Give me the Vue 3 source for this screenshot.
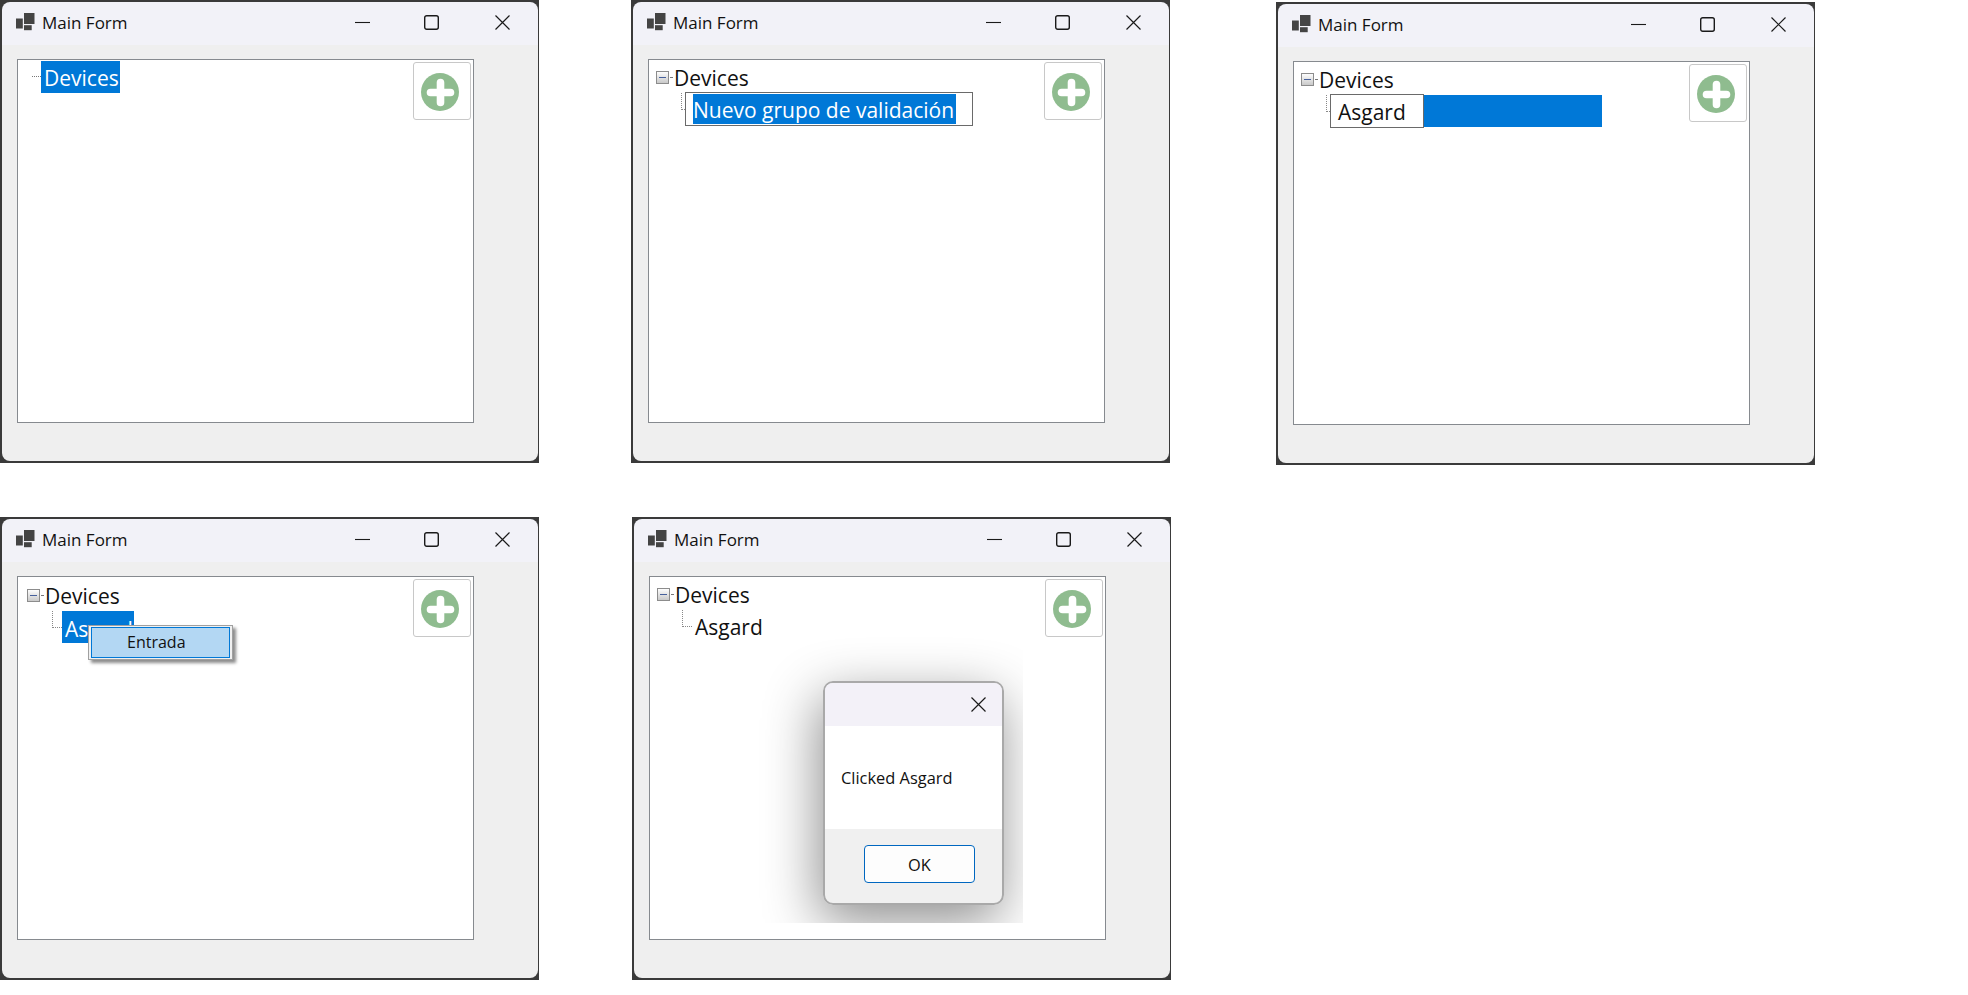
<template>
  <div class="desktop">
    <div v-for="win in windows" :key="win.id" class="window" :class="win.id">
      <div class="titlebar">
        <svg class="app-icon" width="19" height="18" viewBox="0 0 19 18">
          <rect x="8" y="0" width="10.5" height="11" fill="#444" />
          <rect x="0" y="5.5" width="6.8" height="10" fill="#444" />
          <rect x="8" y="12.2" width="7.7" height="5" fill="#444" />
        </svg>
        <span class="title">Main Form</span>
        <div class="controls">
          <svg width="15" height="15" viewBox="0 0 15 15">
            <path d="M0 7.5H15" stroke="#1a1a1a" stroke-width="1.1" />
          </svg>
          <svg class="max-icon" width="15" height="15" viewBox="0 0 15 15">
            <rect x="0.7" y="0.7" width="13.6" height="13.6" rx="2" fill="none" stroke="#1a1a1a" stroke-width="1.4" />
          </svg>
          <svg width="15" height="15" viewBox="0 0 15 15">
            <path d="M0.5 0.5L14.5 14.5M14.5 0.5L0.5 14.5" stroke="#1a1a1a" stroke-width="1.2" />
          </svg>
        </div>
      </div>

      <div class="body">
        <div class="tree">
          <!-- nodo raiz -->
          <div class="node">
            <template v-if="win.id === 'w1'">
              <span class="stub-long"></span>
              <span class="label selected root-selected">Devices</span>
            </template>
            <template v-else>
              <span class="expander"></span>
              <span class="stub"></span>
              <span class="label root-label">Devices</span>
            </template>
          </div>

          <!-- renombrando -->
          <div v-if="win.id === 'w2'" class="node child">
            <span class="elbow short"></span>
            <div class="edit wide">
              <span class="edit-selection">Nuevo grupo de validación</span>
            </div>
          </div>

          <div v-if="win.id === 'w3'" class="node child">
            <span class="elbow short"></span>
            <div class="rename-bar">
              <div class="edit narrow">Asgard</div>
            </div>
          </div>

          <div v-if="win.id === 'w4'" class="node child">
            <span class="elbow"></span>
            <span class="label selected asgard-selected">Asgard</span>
          </div>

          <div v-if="win.id === 'w5'" class="node child">
            <span class="elbow"></span>
            <span class="label">Asgard</span>
          </div>

          <button class="add-btn">
            <svg width="38" height="38" viewBox="0 0 38 38">
              <circle cx="19" cy="19" r="19" fill="#8fbc8f" />
              <path d="M19.5 9.5V29.5M9.5 19.5H29.5" stroke="#fff" stroke-width="7.6" stroke-linecap="round" />
            </svg>
          </button>

          <div v-if="win.id === 'w4'" class="context-menu">
            <div class="menu-item">Entrada</div>
          </div>

          <div v-if="win.id === 'w5'" class="dialog-clip">
            <div class="dialog">
              <div class="dialog-title">
                <svg width="15" height="15" viewBox="0 0 15 15">
                  <path d="M0.5 0.5L14.5 14.5M14.5 0.5L0.5 14.5" stroke="#1a1a1a" stroke-width="1.2" />
                </svg>
              </div>
              <div class="dialog-message">Clicked Asgard</div>
              <div class="dialog-footer">
                <button class="ok-btn">OK</button>
              </div>
            </div>
          </div>
        </div>
      </div>
    </div>
  </div>
</template>

<script setup>
const windows = [
  { id: 'w1' },
  { id: 'w2' },
  { id: 'w3' },
  { id: 'w4' },
  { id: 'w5' }
];
</script>

<style>
html, body {
  margin: 0;
  background: #fff;
}
</style>

<style scoped>
.desktop {
  position: relative;
  width: 1968px;
  height: 995px;
  background: #fff;
  overflow: hidden;
  font-family: "Open Sans", "Noto Sans", sans-serif;
  color: #111;
}

/* ventanas sueltas sobre el escritorio */
.window {
  position: absolute;
  width: 539px;
  height: 463px;
  box-sizing: border-box;
  padding: 2px 1.5px 2px 2px;
  background: #3a3a3a;
  display: flex;
  flex-direction: column;
}
.w1 { left: 0; top: 0; }
.w2 { left: 631px; top: 0; }
.w3 { left: 1276px; top: 2px; }
.w4 { left: 0; top: 517px; }
.w5 { left: 632px; top: 517px; }

.titlebar {
  box-sizing: border-box;
  height: 43px;
  flex-shrink: 0;
  display: flex;
  align-items: center;
  background: #f2f2f8;
  border-radius: 8px 8px 0 0;
  padding: 0 28px 2px 14px;
}
.app-icon {
  flex-shrink: 0;
  margin-top: -2px;
}
.title {
  margin-left: 7px;
  font-size: 17px;
  line-height: 20px;
}
.controls {
  margin-left: auto;
  display: flex;
  gap: 55px;
  align-items: center;
}
.max-icon {
  margin: 0 1px 0 -1px;
}

.body {
  flex: 1;
  background: #efefef;
  border-radius: 0 0 8px 8px;
  padding: 14px 0 0 15px;
}

.tree {
  position: relative;
  box-sizing: border-box;
  width: 457px;
  height: 364px;
  background: #fff;
  border: 1px solid #868a8f;
  padding-top: 1px;
  font-size: 21px;
}
.w4 .tree {
  padding-top: 2px;
  padding-left: 2px;
}

.node {
  display: flex;
  align-items: center;
  height: 32px;
  white-space: nowrap;
}
.child {
  padding-left: 32px;
}

.expander {
  box-sizing: border-box;
  width: 13px;
  height: 13px;
  margin-left: 7px;
  border: 1px solid #8c8c8c;
  background: linear-gradient(#fdfdfd, #c9c9c9);
  display: flex;
  align-items: center;
  justify-content: center;
}
.expander::before {
  content: "";
  width: 7px;
  height: 1px;
  background: #46609c;
}
.stub {
  width: 2px;
  margin-left: 1px;
  border-top: 1px dotted #777;
}
.stub-long {
  width: 9px;
  margin-left: 14px;
  margin-top: -1px;
  border-top: 1px dotted #777;
}
.elbow {
  align-self: flex-start;
  box-sizing: border-box;
  width: 10px;
  height: 17px;
  border-left: 1px dotted #888;
  border-bottom: 1px dotted #888;
}
.elbow.short {
  width: 4px;
}

.label {
  padding: 0 3px;
  height: 32px;
  line-height: 35px;
}
.root-label {
  padding-left: 2px;
}
.selected {
  background: #0078d7;
  color: #fff;
}
.root-selected {
  padding: 0 1px 0 3px;
}
.asgard-selected {
  width: 66px;
  overflow: hidden;
  line-height: 37px;
}

.edit {
  box-sizing: border-box;
  height: 34px;
  flex-shrink: 0;
  border: 1px solid #6a6a6a;
  background: #fff;
  display: flex;
  align-items: center;
}
.edit.wide {
  width: 288px;
  padding-left: 7px;
}
.edit-selection {
  width: 263px;
  height: 30px;
  line-height: 33px;
  background: #0078d7;
  color: #fff;
}
.rename-bar {
  position: relative;
  width: 272px;
  height: 32px;
  background: #0078d7;
}
.edit.narrow {
  position: absolute;
  left: 0;
  top: -1px;
  width: 94px;
  padding: 1px 0 0 7px;
}

.add-btn {
  position: absolute;
  top: 2px;
  right: 2px;
  box-sizing: border-box;
  width: 58px;
  height: 58px;
  padding: 2px 4px 0 0;
  border: 1px solid #c8c8c8;
  border-radius: 3px;
  background: #fff;
  display: flex;
  align-items: center;
  justify-content: center;
}

.context-menu {
  position: absolute;
  left: 70px;
  top: 48px;
  box-sizing: border-box;
  width: 145px;
  height: 35px;
  padding: 1px 2px;
  border: 1px solid #a0a0a0;
  background: #f0f0f0;
  box-shadow: 3px 3px 3px rgba(0, 0, 0, 0.45);
}
.menu-item {
  box-sizing: border-box;
  height: 31px;
  padding-left: 35px;
  border: 1px solid #0078d7;
  background: #b3d7f3;
  font-size: 16px;
  line-height: 29px;
}

.dialog-clip {
  position: absolute;
  left: 92px;
  top: 60px;
  width: 281px;
  height: 286px;
  overflow: hidden;
}
.dialog {
  position: absolute;
  left: 81px;
  top: 44px;
  box-sizing: border-box;
  width: 181px;
  height: 224px;
  border: 2px solid #a9a9a9;
  border-radius: 10px;
  overflow: hidden;
  display: flex;
  flex-direction: column;
  background: #f0f0f0;
}
.dialog-clip::before {
  content: "";
  position: absolute;
  left: 81px;
  top: 44px;
  width: 181px;
  height: 224px;
  border-radius: 10px;
  box-shadow: -4px 16px 54px rgba(0, 0, 0, 0.45);
}
.dialog-title {
  height: 43px;
  flex-shrink: 0;
  background: #f3f1f8;
  display: flex;
  align-items: center;
  justify-content: flex-end;
  padding-right: 16px;
}
.dialog-message {
  height: 103px;
  flex-shrink: 0;
  box-sizing: border-box;
  background: #fff;
  padding-left: 16px;
  display: flex;
  align-items: center;
  font-size: 16.4px;
}
.dialog-footer {
  flex: 1;
  padding: 16px 0 0 39px;
}
.ok-btn {
  width: 111px;
  height: 38px;
  box-sizing: border-box;
  border: 1px solid #0067c0;
  border-radius: 4px;
  background: #fdfdfd;
  font-family: inherit;
  font-size: 16.4px;
  color: #111;
  padding: 0;
}
</style>
